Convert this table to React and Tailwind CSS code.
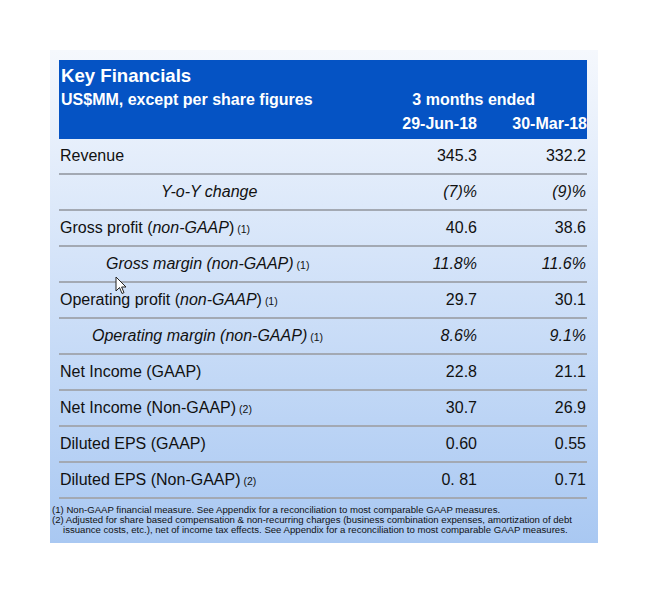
const rows = [
  { label: 'Revenue', a: '345.3', b: '332.2' },
  { label: 'Y-o-Y change', a: '(7)%', b: '(9)%', italic: true, indent: 'pl-[102px]' },
  { label: 'Gross profit', gaap: 'non-GAAP', note: '(1)', a: '40.6', b: '38.6' },
  { label: 'Gross margin (non-GAAP)', note: '(1)', a: '11.8%', b: '11.6%', italic: true, indent: 'pl-[47px]' },
  { label: 'Operating profit', gaap: 'non-GAAP', note: '(1)', a: '29.7', b: '30.1' },
  { label: 'Operating margin (non-GAAP)', note: '(1)', a: '8.6%', b: '9.1%', italic: true, indent: 'pl-[33px]' },
  { label: 'Net Income (GAAP)', a: '22.8', b: '21.1' },
  { label: 'Net Income (Non-GAAP)', note: '(2)', a: '30.7', b: '26.9' },
  { label: 'Diluted EPS (GAAP)', a: '0.60', b: '0.55' },
  { label: 'Diluted EPS (Non-GAAP)', note: '(2)', a: '0. 81', b: '0.71' },
];

function Row({ row }) {
  const it = row.italic ? 'italic' : '';
  return (
    <div className="flex h-[36px] items-center border-b-2 border-[#a3a9b3] text-[16px] text-[#111]">
      <div className={`flex-1 pl-[1px] ${row.indent || ''} ${it}`}>
        {row.label}
        {row.gaap && (
          <>
            {' ('}
            <span className="italic">{row.gaap}</span>)
          </>
        )}
        {row.note && <span className="ml-[3px] text-[10.5px] not-italic">{row.note}</span>}
      </div>
      <div className={`w-[110px] text-right ${it}`}>{row.a}</div>
      <div className={`w-[110px] pr-[1px] text-right ${it}`}>{row.b}</div>
    </div>
  );
}

function Cursor() {
  return (
    <svg className="absolute left-[115px] top-[276px]" width="12" height="19" viewBox="0 0 12 19">
      <path d="M1 1 L1 15 L4.5 11.5 L7 17.5 L9 16.6 L6.6 11 L11 11 Z" fill="#fff" stroke="#222" strokeWidth="1" strokeLinejoin="round" />
    </svg>
  );
}

export default function App() {
  return (
    <div className="relative h-[594px] w-[648px] bg-white pl-[50px] pt-[50px] font-['Liberation_Sans',Arial,sans-serif]">
      <div className="flex h-[493px] w-[548px] flex-col bg-gradient-to-b from-[#f5f8fd] to-[#a9c8f2] pl-[9px] pr-[11px] pt-[10px]">
        <div className="h-[79px] bg-[#0553c4] pl-[2px] pt-[4px] font-bold text-white">
          <div className="text-[18.6px] leading-[24px]">Key Financials</div>
          <div className="flex text-[16px] leading-[24px]">
            <div className="flex-1">US$MM, except per share figures</div>
            <div className="w-[220px] pr-[52px] text-right">3 months ended</div>
          </div>
          <div className="flex text-[16px] leading-[24px]">
            <div className="flex-1" />
            <div className="w-[110px] text-right">29-Jun-18</div>
            <div className="w-[110px] text-right">30-Mar-18</div>
          </div>
        </div>
        {rows.map((r) => (
          <Row key={r.label} row={r} />
        ))}
        <div className="-ml-[7px] pt-[6px] text-[9.6px] leading-[10px] text-[#111]">
          <div>(1) Non-GAAP financial measure. See Appendix for a reconciliation to most comparable GAAP measures.</div>
          <div>(2) Adjusted for share based compensation &amp; non-recurring charges (business combination expenses, amortization of debt</div>
          <div className="pl-[11px]">issuance costs, etc.), net of income tax effects. See Appendix for a reconciliation to most comparable GAAP measures.</div>
        </div>
      </div>
      <Cursor />
    </div>
  );
}
